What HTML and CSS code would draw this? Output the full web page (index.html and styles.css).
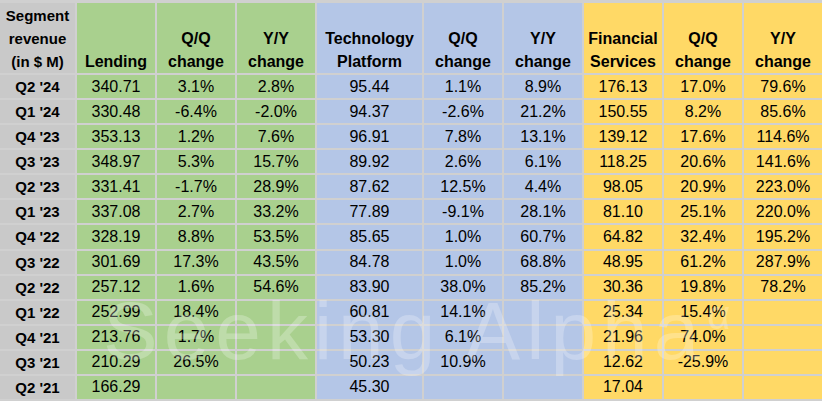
FILE: index.html
```html
<!DOCTYPE html>
<html>
<head>
<meta charset="utf-8">
<link rel="stylesheet" href="styles.css">
</head>
<body>
<div class="wrap">
  <div class="sheet">
    <div class="c lab hd">Segment<br>revenue<br>(in $ M)</div>
    <div class="c g hd">Lending</div>
    <div class="c g hd">Q/Q<br>change</div>
    <div class="c g hd">Y/Y<br>change</div>
    <div class="c b hd">Technology<br>Platform</div>
    <div class="c b hd">Q/Q<br>change</div>
    <div class="c b hd">Y/Y<br>change</div>
    <div class="c y hd">Financial<br>Services</div>
    <div class="c y hd">Q/Q<br>change</div>
    <div class="c y hd">Y/Y<br>change</div>

    <div class="c lab">Q2 '24</div><div class="c g">340.71</div><div class="c g">3.1%</div><div class="c g">2.8%</div><div class="c b">95.44</div><div class="c b">1.1%</div><div class="c b">8.9%</div><div class="c y">176.13</div><div class="c y">17.0%</div><div class="c y">79.6%</div>
    <div class="c lab">Q1 '24</div><div class="c g">330.48</div><div class="c g">-6.4%</div><div class="c g">-2.0%</div><div class="c b">94.37</div><div class="c b">-2.6%</div><div class="c b">21.2%</div><div class="c y">150.55</div><div class="c y">8.2%</div><div class="c y">85.6%</div>
    <div class="c lab">Q4 '23</div><div class="c g">353.13</div><div class="c g">1.2%</div><div class="c g">7.6%</div><div class="c b">96.91</div><div class="c b">7.8%</div><div class="c b">13.1%</div><div class="c y">139.12</div><div class="c y">17.6%</div><div class="c y">114.6%</div>
    <div class="c lab">Q3 '23</div><div class="c g">348.97</div><div class="c g">5.3%</div><div class="c g">15.7%</div><div class="c b">89.92</div><div class="c b">2.6%</div><div class="c b">6.1%</div><div class="c y">118.25</div><div class="c y">20.6%</div><div class="c y">141.6%</div>
    <div class="c lab">Q2 '23</div><div class="c g">331.41</div><div class="c g">-1.7%</div><div class="c g">28.9%</div><div class="c b">87.62</div><div class="c b">12.5%</div><div class="c b">4.4%</div><div class="c y">98.05</div><div class="c y">20.9%</div><div class="c y">223.0%</div>
    <div class="c lab">Q1 '23</div><div class="c g">337.08</div><div class="c g">2.7%</div><div class="c g">33.2%</div><div class="c b">77.89</div><div class="c b">-9.1%</div><div class="c b">28.1%</div><div class="c y">81.10</div><div class="c y">25.1%</div><div class="c y">220.0%</div>
    <div class="c lab">Q4 '22</div><div class="c g">328.19</div><div class="c g">8.8%</div><div class="c g">53.5%</div><div class="c b">85.65</div><div class="c b">1.0%</div><div class="c b">60.7%</div><div class="c y">64.82</div><div class="c y">32.4%</div><div class="c y">195.2%</div>
    <div class="c lab">Q3 '22</div><div class="c g">301.69</div><div class="c g">17.3%</div><div class="c g">43.5%</div><div class="c b">84.78</div><div class="c b">1.0%</div><div class="c b">68.8%</div><div class="c y">48.95</div><div class="c y">61.2%</div><div class="c y">287.9%</div>
    <div class="c lab">Q2 '22</div><div class="c g">257.12</div><div class="c g">1.6%</div><div class="c g">54.6%</div><div class="c b">83.90</div><div class="c b">38.0%</div><div class="c b">85.2%</div><div class="c y">30.36</div><div class="c y">19.8%</div><div class="c y">78.2%</div>
    <div class="c lab">Q1 '22</div><div class="c g">252.99</div><div class="c g">18.4%</div><div class="c g"></div><div class="c b">60.81</div><div class="c b">14.1%</div><div class="c b"></div><div class="c y">25.34</div><div class="c y">15.4%</div><div class="c y"></div>
    <div class="c lab">Q4 '21</div><div class="c g">213.76</div><div class="c g">1.7%</div><div class="c g"></div><div class="c b">53.30</div><div class="c b">6.1%</div><div class="c b"></div><div class="c y">21.96</div><div class="c y">74.0%</div><div class="c y"></div>
    <div class="c lab">Q3 '21</div><div class="c g">210.29</div><div class="c g">26.5%</div><div class="c g"></div><div class="c b">50.23</div><div class="c b">10.9%</div><div class="c b"></div><div class="c y">12.62</div><div class="c y">-25.9%</div><div class="c y"></div>
    <div class="c lab">Q2 '21</div><div class="c g">166.29</div><div class="c g"></div><div class="c g"></div><div class="c b">45.30</div><div class="c b"></div><div class="c b"></div><div class="c y">17.04</div><div class="c y"></div><div class="c y"></div>
  </div>
  <div class="watermark" aria-hidden="true">Seeking Alpha<span class="alpha">α</span></div>
</div>
</body>
</html>
```

FILE: styles.css
```css
html, body {
  margin: 0;
  padding: 0;
  background: #ffffff;
}

.wrap {
  position: relative;
  width: 822px;
  height: 401px;
  overflow: hidden;
}

.sheet {
  box-sizing: border-box;
  width: 822px;
  height: 401px;
  display: grid;
  grid-template-columns: 75px 78px 78px 78px 105px 78px 78px 78px 78px 78px;
  grid-template-rows: 70px repeat(13, 1fr);
  gap: 2px;
  padding: 3px 0 2px 0;
  background: #d0d0d0;
  font-family: "Liberation Sans", Arial, sans-serif;
  font-size: 16px;
  color: #000;
}

.c {
  display: flex;
  align-items: center;
  justify-content: center;
  text-align: center;
  white-space: nowrap;
}

.hd {
  align-items: flex-end;
  font-weight: bold;
  line-height: 23px;
}

.lab {
  background: #c9c9c9;
  font-weight: bold;
  font-size: 15px;
}

.g { background: #a9d08e; }
.b { background: #b4c6e7; }
.y { background: #ffd966; }

.watermark {
  position: absolute;
  left: 103px;
  top: 290px;
  font-family: "Liberation Sans", Arial, sans-serif;
  font-size: 82px;
  letter-spacing: 6px;
  color: rgba(255, 255, 255, 0.25);
  white-space: nowrap;
  pointer-events: none;
  line-height: 1;
}

.alpha {
  font-size: 40px;
  vertical-align: 30px;
  margin-left: 2px;
}
```
